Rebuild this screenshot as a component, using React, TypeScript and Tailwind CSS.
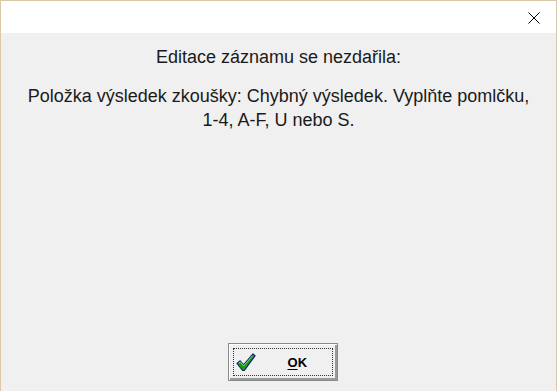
import React from "react";

function Check() {
  return (
    <svg width="20" height="20" viewBox="0 0 20 20">
      <path d="M1 11.5 L4.2 8.8 L7.6 12.8 L17 2 L19 3.8 L8.3 18.5 L6.6 18.5 Z" fill="#169a16" stroke="#1c2470" strokeWidth="1.2" strokeLinejoin="round" />
      <path d="M2.8 11.2 L4.4 9.9 L7.7 14 L16.6 3.6" fill="none" stroke="#7fe27f" strokeWidth="1" />
    </svg>
  );
}

export default function App() {
  return (
    <div className="w-[557px] h-[391px] overflow-hidden flex flex-col bg-[#f0f0f0] border-x border-t border-[#dac8a8]" style={{ fontFamily: '"Liberation Sans", Arial, sans-serif' }}>
      <div className="h-[32px] bg-white flex justify-end items-start shrink-0">
        <div className="w-[44px] h-[34px] flex items-center justify-center">
          <svg width="12" height="12" viewBox="0 0 12 12">
            <path d="M0.5 0.5 L11.5 11.5 M11.5 0.5 L0.5 11.5" stroke="#000" strokeWidth="1" />
          </svg>
        </div>
      </div>
      <div className="flex-1 flex flex-col items-center text-[18px] text-[#1a1a1a]">
        <div className="mt-[14px] text-center leading-[20px]">Editace záznamu se nezdařila:</div>
        <div className="mt-[17px] text-center leading-[24px]">
          Položka výsledek zkoušky: Chybný výsledek. Vyplňte pomlčku,<br />1-4, A-F, U nebo S.
        </div>
        <div className="flex-1" />
        <div className="mb-[10px] ml-[8px] w-[110px] h-[38px] border border-[#8a8a8a] bg-[#f0f0f0] shadow-[inset_1px_1px_0_#ffffff,inset_-2px_-2px_0_#9a9a9a] p-[4px]">
          <div className="w-full h-full border border-dotted border-[#333] flex items-center pl-[2px]">
            <Check />
            <span className="ml-[32px] text-[13px] font-bold text-black leading-none"><span className="underline underline-offset-2">O</span>K</span>
          </div>
        </div>
      </div>
    </div>
  );
}
